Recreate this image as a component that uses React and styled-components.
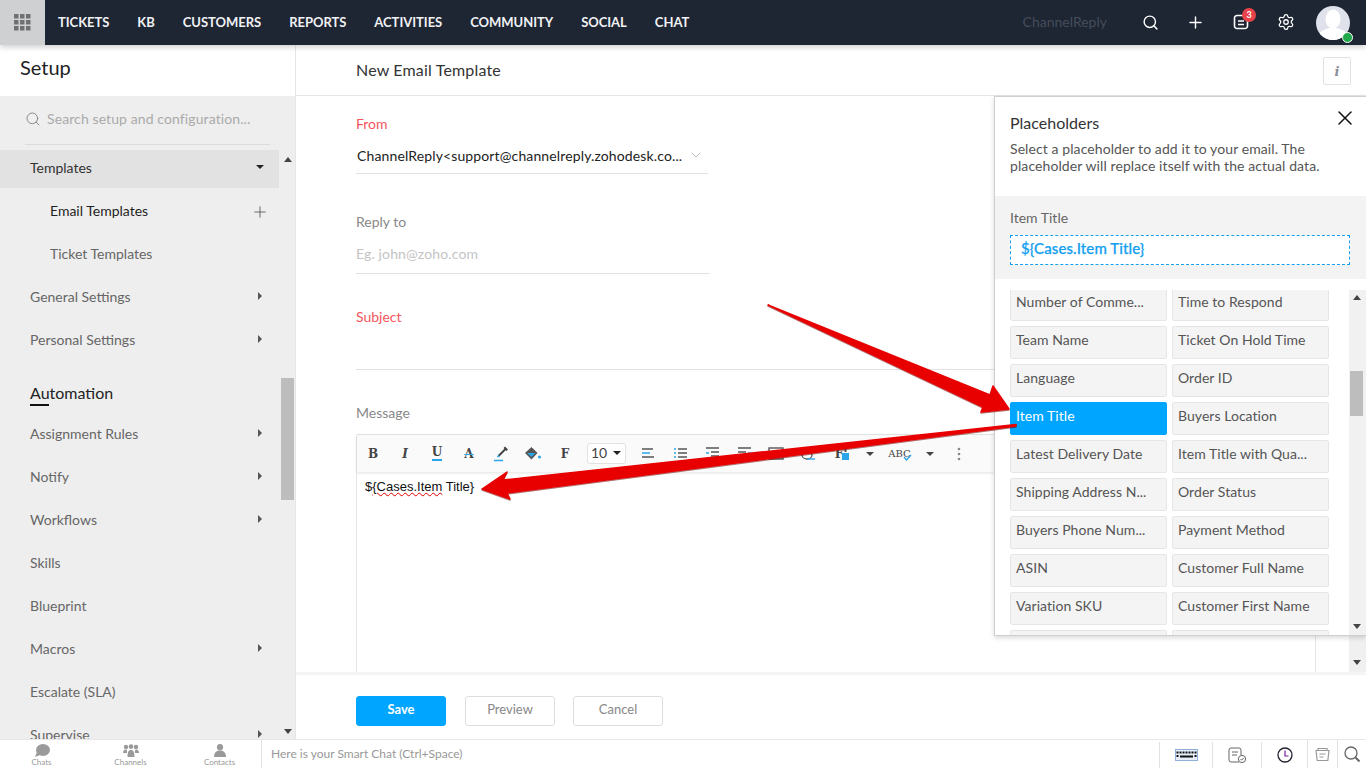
import React from "react";
import styled, { createGlobalStyle } from "styled-components";
import { Search, Plus, Settings, X, ChevronDown } from "lucide-react";

const Global = createGlobalStyle`
  html, body { margin: 0; padding: 0; height: 100%; overflow: hidden; }
  body { font-family: Lato, "Open Sans", sans-serif; font-size: 14px; color: #555; }
  * { box-sizing: border-box; }
`;

const Page = styled.div`
  position: relative;
  width: 1366px;
  height: 768px;
  display: flex;
  flex-direction: column;
  overflow: hidden;
  background: #fff;
`;

/* ---- top bar ---- */
const TopBar = styled.header`
  height: 45px;
  flex: none;
  display: flex;
  align-items: center;
  background: #1e2533;
  box-shadow: 0 2px 6px rgba(0, 0, 0, 0.2);
  position: relative;
  z-index: 3;
  padding-right: 16px;
`;
const AppsButton = styled.div`
  width: 45px;
  height: 45px;
  background: #cfd0d1;
  display: flex;
  align-items: center;
  justify-content: center;
`;
const Nav = styled.nav`
  display: flex;
  gap: 28px;
  margin-left: 13px;
  padding-bottom: 2px;
`;
const NavLink = styled.span`
  font-size: 13px;
  font-weight: 700;
  color: #f0f1f3;
  letter-spacing: -0.03px;
`;
const Brand = styled.span`
  margin-left: auto;
  margin-right: 21px;
  padding-bottom: 2px;
  font-size: 14px;
  color: #454c5a;
`;
const TopIcon = styled.div`
  width: 45px;
  height: 45px;
  display: flex;
  align-items: center;
  justify-content: center;
  position: relative;
  color: #fff;
  padding-bottom: 1px;
`;
const Badge = styled.span`
  position: absolute;
  top: 8px;
  left: 24px;
  width: 14px;
  height: 14px;
  border-radius: 50%;
  background: #e8434a;
  color: #fff;
  font-size: 9px;
  font-weight: 700;
  line-height: 14px;
  text-align: center;
`;
const Avatar = styled.div`
  position: relative;
  width: 34px;
  height: 34px;
  margin-left: 8px;
`;
const OnlineDot = styled.span`
  position: absolute;
  right: -3px;
  bottom: -3px;
  width: 11px;
  height: 11px;
  border-radius: 50%;
  background: #21a84a;
  border: 1px solid #fff;
`;

/* ---- body ---- */
const Body = styled.div`
  flex: 1;
  min-height: 0;
  display: flex;
`;

/* ---- sidebar ---- */
const Sidebar = styled.aside`
  width: 296px;
  flex: none;
  display: flex;
  flex-direction: column;
  background: #eeeeee;
  border-right: 1px solid #e6e6e6;
`;
const SetupHead = styled.div`
  height: 51px;
  flex: none;
  background: #fff;
  padding: 8px 0 0 20px;
  font-size: 20px;
  line-height: 28px;
  color: #222;
`;
const SearchBox = styled.div`
  flex: none;
  height: 49px;
  margin: 0 25px 0;
  border-bottom: 1px solid #dcdcdc;
  display: flex;
  align-items: center;
  gap: 6px;
  color: #aaa;
  font-size: 14px;
  letter-spacing: 0.1px;
  padding-bottom: 3px;
`;
const MenuArea = styled.div`
  flex: 1;
  min-height: 0;
  display: flex;
  padding-top: 5px;
`;
const Menu = styled.div`
  width: 279px;
  flex: none;
  overflow: hidden;
`;
const MenuRow = styled.div`
  height: 38px;
  margin-bottom: 5px;
  display: flex;
  align-items: center;
  justify-content: space-between;
  padding: 0 15px 4px ${(p) => (p.$sub ? "50px" : "30px")};
  background: ${(p) => (p.$open ? "#e2e2e2" : "transparent")};
  color: ${(p) => (p.$open ? "#333" : p.$active ? "#1f1f1f" : "#666")};
  font-size: 14px;
`;
const MenuHeading = styled.div`
  height: 51px;
  padding: 18px 0 0 30px;
  font-size: 16px;
  line-height: 20px;
  color: #222;
`;
const HeadingText = styled.span`
  display: inline-block;
  position: relative;
  &::after {
    content: "";
    position: absolute;
    left: 0;
    bottom: -3px;
    width: 19px;
    height: 2px;
    background: #111;
  }
`;
const CaretRight = styled.span`
  width: 0;
  height: 0;
  border-top: 4px solid transparent;
  border-bottom: 4px solid transparent;
  border-left: 4px solid #555;
  margin-right: 2px;
`;
const CaretDown = styled.span`
  width: 0;
  height: 0;
  border-left: 4px solid transparent;
  border-right: 4px solid transparent;
  border-top: 4px solid ${(p) => p.$color || "#222"};
`;
const AddIcon = styled(Plus)`
  margin-right: -5px;
  margin-top: 3px;
`;
const Scroll = styled.div`
  position: relative;
  flex: none;
  width: ${(p) => p.$w || 16}px;
  margin-left: ${(p) => p.$ml || 0}px;
  background: ${(p) => p.$bg || "transparent"};
`;
const ScrollThumb = styled.div`
  position: absolute;
  left: 1px;
  top: ${(p) => p.$top}px;
  width: 13px;
  height: ${(p) => p.$height}px;
  background: #bdbdbd;
`;
const ArrowUp = styled.span`
  position: absolute;
  left: 4px;
  top: ${(p) => p.$top}px;
  border-left: 4px solid transparent;
  border-right: 4px solid transparent;
  border-bottom: 5px solid #444;
`;
const ArrowDown = styled.span`
  position: absolute;
  left: 4px;
  bottom: ${(p) => p.$bottom}px;
  border-left: 4px solid transparent;
  border-right: 4px solid transparent;
  border-top: 5px solid #444;
`;

/* ---- main ---- */
const Main = styled.main`
  flex: 1;
  min-width: 0;
  position: relative;
  display: flex;
  flex-direction: column;
`;
const MainHead = styled.div`
  height: 51px;
  flex: none;
  display: flex;
  align-items: center;
  justify-content: space-between;
  padding: 0 15px 0 60px;
  border-bottom: 1px solid #e6e6e6;
  font-size: 16px;
  color: #333;
`;
const MainTitle = styled.span`
  letter-spacing: 0.17px;
  padding-bottom: 2px;
`;
const InfoButton = styled.div`
  width: 28px;
  height: 28px;
  border: 1px solid #e2e2e2;
  border-radius: 2px;
  display: flex;
  align-items: center;
  justify-content: center;
  font: italic 700 13px "DejaVu Serif", serif;
  color: #8a8f98;
  margin-top: 2px;
`;
const Content = styled.div`
  flex: 1;
  min-height: 0;
  display: flex;
  overflow: hidden;
`;
const Form = styled.div`
  flex: 1;
  min-width: 0;
  padding: 18px 33px 0 60px;
`;
const Label = styled.div`
  font-size: 14px;
  line-height: 20px;
  margin-top: ${(p) => p.$mt || 0}px;
  color: ${(p) => (p.$required ? "#f4555c" : "#888")};
`;
const Field = styled.div`
  width: ${(p) => (p.$width ? `${p.$width}px` : "100%")};
  height: ${(p) => p.$height}px;
  border-bottom: 1px solid #e2e2e2;
  display: flex;
  align-items: flex-end;
  justify-content: space-between;
  padding-bottom: ${(p) => p.$pb || 8}px;
  padding-left: ${(p) => p.$pl || 0}px;
  line-height: 20px;
  font-size: 14px;
  letter-spacing: 0.13px;
  color: ${(p) => (p.$placeholder ? "#c4c4c4" : "#222")};
`;
const Editor = styled.div`
  margin-top: 11px;
  height: 320px;
  border: 1px solid #e6e6e6;
  border-bottom: 0;
  border-radius: 2px 2px 0 0;
`;
const Toolbar = styled.div`
  height: 37px;
  display: flex;
  align-items: center;
  background: #fafafa;
  box-shadow: 0 1px 3px rgba(0, 0, 0, 0.12);
`;
const Tool = styled.div`
  width: 32px;
  flex: none;
  height: 24px;
  display: flex;
  align-items: center;
  justify-content: center;
  margin-left: ${(p) => p.$ml || 0}px;
  font: ${(p) => (p.$italic ? "italic " : "")}${(p) => p.$weight || 700} ${(p) => p.$size || 12}px "DejaVu Serif", serif;
  color: #444;
`;
const Underlined = styled.span`
  border-bottom: 2px solid #2aa5ea;
  line-height: 13px;
`;
const Struck = styled.span`
  text-decoration: line-through;
  text-decoration-color: #2aa5ea;
`;
const ToolMark = styled.span`
  display: flex;
  margin-left: ${(p) => p.$ml}px;
  margin-top: ${(p) => p.$mt || 0}px;
`;
const FontSize = styled.div`
  width: 39px;
  height: 21px;
  margin: 0 6px;
  flex: none;
  border: 1px solid #e2e2e2;
  border-radius: 3px;
  background: #fff;
  display: flex;
  align-items: center;
  justify-content: space-between;
  padding: 0 4px 2px 3px;
  font-size: 14px;
  color: #444;
`;
const EditorBody = styled.div`
  padding: 6px 8px;
  font-family: "Liberation Sans", Arial, sans-serif;
  font-size: 13px;
  line-height: 17px;
  color: #111;
`;
const Misspelled = styled.span`
  text-decoration: underline wavy #e00000 1px;
`;
const Footer = styled.div`
  height: 67px;
  flex: none;
  display: flex;
  gap: 18px;
  padding: 21px 0 0 60px;
  border-top: 3px solid #f5f5f5;
`;
const Button = styled.div`
  width: 90px;
  height: 30px;
  border-radius: 3px;
  display: flex;
  align-items: center;
  justify-content: center;
  padding-bottom: 5px;
  font-size: 13px;
  font-weight: ${(p) => (p.$primary ? 700 : 400)};
  margin-right: ${(p) => (p.$primary ? "1px" : "0")};
  background: ${(p) => (p.$primary ? "#00a5ff" : "#fff")};
  color: ${(p) => (p.$primary ? "#fff" : "#888")};
  border: 1px solid ${(p) => (p.$primary ? "#00a5ff" : "#dedede")};
`;

/* ---- placeholders panel ---- */
const Panel = styled.section`
  position: absolute;
  top: 51px;
  right: 0;
  width: 372px;
  height: 540px;
  background: #fff;
  border: 1px solid #cfcfcf;
  border-right: 0;
  box-shadow: 0 2px 5px rgba(0, 0, 0, 0.15);
  display: flex;
  flex-direction: column;
  z-index: 2;
`;
const PanelHead = styled.div`
  position: relative;
  height: 99px;
  flex: none;
  padding: 16px 40px 0 15px;
`;
const PanelTitle = styled.div`
  font-size: 16px;
  line-height: 20px;
  color: #333;
`;
const PanelText = styled.p`
  margin: 7px 0 0;
  font-size: 14px;
  line-height: 17px;
  letter-spacing: 0.09px;
  color: #555;
`;
const Close = styled.div`
  position: absolute;
  top: 9px;
  right: 9px;
  color: #111;
  display: flex;
`;
const Preview = styled.div`
  height: 83px;
  flex: none;
  background: #f3f3f3;
  padding: 12px 16px 0 15px;
`;
const PreviewLabel = styled.div`
  font-size: 14px;
  line-height: 20px;
  color: #666;
`;
const TokenBox = styled.div`
  margin-top: 7px;
  height: 30px;
  background: #fff;
  border: 1px dashed #14a0f0;
  padding-left: 10px;
  font-size: 15px;
  font-weight: 500;
  line-height: 25px;
  letter-spacing: 0.1px;
  color: #14a0f0;
  -webkit-text-stroke: 0.25px #14a0f0;
`;
const ListWrap = styled.div`
  flex: 1;
  min-height: 0;
  margin-top: 11px;
  display: flex;
  justify-content: space-between;
  padding-left: 15px;
`;
const ChipList = styled.div`
  width: 320px;
  overflow: hidden;
`;
const ChipGrid = styled.div`
  margin-top: -2px;
  display: grid;
  grid-template-columns: 157px 157px;
  grid-auto-rows: 33px;
  column-gap: 5px;
  row-gap: 5px;
`;
const Chip = styled.div`
  border: 1px solid ${(p) => (p.$active ? "#00a5ff" : "#e6e6e6")};
  border-radius: 2px;
  background: ${(p) => (p.$active ? "#00a5ff" : "#f4f4f4")};
  color: ${(p) => (p.$active ? "#fff" : "#555")};
  font-size: 14px;
  line-height: 20px;
  letter-spacing: 0.05px;
  padding: 3px 0 0 5px;
  white-space: nowrap;
  overflow: hidden;
`;

/* ---- bottom bar ---- */
const BottomBar = styled.footer`
  height: 29px;
  flex: none;
  display: flex;
  align-items: stretch;
  background: #fff;
  border-top: 1px solid #e8e8e8;
  position: relative;
  z-index: 2;
`;
const ChatTabs = styled.div`
  width: 262px;
  flex: none;
  display: flex;
  border-right: 1px solid #e2e2e2;
`;
const ChatTab = styled.div`
  width: 89px;
  flex: none;
  display: flex;
  flex-direction: column;
  align-items: center;
  gap: 1px;
  font-size: 8px;
  line-height: 9px;
  color: #999;
  padding-top: 4px;
  margin-left: ${(p) => p.$ml || 0}px;
`;
const SmartChat = styled.div`
  flex: 1;
  padding: 0 0 2px 9px;
  display: flex;
  align-items: center;
  font-size: 12px;
  color: #999;
`;
const Dock = styled.div`
  width: ${(p) => p.$w}px;
  flex: none;
  display: flex;
  align-items: center;
  justify-content: center;
  border-left: 1px solid #e2e2e2;
  margin: ${(p) => (p.$tall ? "0" : "2px 0 0")};
`;

/* ---- annotation arrows ---- */
const ArrowLayer = styled.svg`
  position: absolute;
  inset: 0;
  width: 1366px;
  height: 768px;
  pointer-events: none;
  z-index: 4;
`;

/* ---- small drawings ---- */
const Grid3 = () => (
  <svg width="17" height="17" viewBox="0 0 17 17" fill="#6f7072">
    {[0, 6, 12].flatMap((y) => [0, 6, 12].map((x) => <rect key={`${x}${y}`} x={x} y={y} width="4.5" height="4.5" />))}
  </svg>
);
const NoteIcon = () => (
  <svg width="18" height="18" viewBox="0 0 18 18" fill="none" stroke="#fff" strokeWidth="1.6">
    <path d="M11 2.500H5A2.500 2.500 0 0 0 2.500 5v8A2.500 2.500 0 0 0 5 15.500h8a2.500 2.500 0 0 0 2.500-2.500V8" />
    <path d="M6 8h6M6 11.500h6" />
  </svg>
);
const AvatarArt = () => (
  <svg width="34" height="34" viewBox="0 0 34 34">
    <defs><clipPath id="av"><circle cx="17" cy="17" r="17" /></clipPath></defs>
    <g clipPath="url(#av)">
      <rect width="34" height="34" fill="#dfe2ea" />
      <ellipse cx="17" cy="13" rx="7.500" ry="9.500" fill="#fff" />
      <path d="M0 34c1-8 8-10 13-12h8c5 2 12 4 13 12z" fill="#fff" />
    </g>
  </svg>
);
const Lines = ({ d }) => (
  <svg width="15" height="13" viewBox="0 0 15 13" fill="none" strokeWidth="1.500">
    {d.map(([x1, x2, y, c], i) => (
      <path key={i} d={`M${x1} ${y}H${x2}`} stroke={c ? "#2aa5ea" : "#555"} />
    ))}
  </svg>
);
const Pen = () => (
  <svg width="17" height="17" viewBox="0 0 17 17" fill="none">
    <path d="M12 1.500l3 3-1.500 1.500-.8-.8-6 6-2.200.8.800-2.200 6-6-.8-.8z" fill="#444" />
    <path d="M5 9.500l-1 3 3-1z" fill="#2aa5ea" />
    <path d="M1 15.500h9" stroke="#2aa5ea" strokeWidth="1.500" />
  </svg>
);
const Bucket = () => (
  <svg width="18" height="16" viewBox="0 0 18 16">
    <path d="M7.500 1l6 6-6 6.500-6.500-6.500z" fill="#555" />
    <path d="M3 7h8.500L7.500 11z" fill="#2aa5ea" />
    <path d="M8 1.500c2-1 3.500 0 3.500 2" stroke="#fff" fill="none" />
    <circle cx="15.500" cy="11" r="1.500" fill="#2aa5ea" />
  </svg>
);
const ImageBox = () => (
  <svg width="16" height="13" viewBox="0 0 16 13" fill="none" stroke="#555" strokeWidth="1.400"><rect x="1" y="1" width="14" height="11" /></svg>
);
const Eraser = () => (
  <svg width="16" height="14" viewBox="0 0 16 14" fill="none"><ellipse cx="7" cy="8" rx="5" ry="4" stroke="#555" strokeWidth="1.300" /><path d="M7 12h8" stroke="#2aa5ea" strokeWidth="1.400" /></svg>
);
const BlueF = () => (
  <svg width="11" height="15" viewBox="0 0 11 15"><rect x="2" y="7" width="7" height="7" fill="#2aa5ea" /><rect x="4.500" y="1" width="2" height="5" fill="#555" /></svg>
);
const Spell = () => (
  <svg width="9" height="7" viewBox="0 0 9 7" fill="none" stroke="#2aa5ea" strokeWidth="1.400"><path d="M1 3l2.500 3 4.500-5" /></svg>
);
const Dots = () => (
  <svg width="4" height="14" viewBox="0 0 4 14" fill="#888"><circle cx="2" cy="2" r="1.300" /><circle cx="2" cy="7" r="1.300" /><circle cx="2" cy="12" r="1.300" /></svg>
);
const ChatBubble = () => (
  <svg width="16" height="13" viewBox="0 0 16 13" fill="#9a9a9a"><ellipse cx="9" cy="6" rx="7" ry="6" /><path d="M3 8l-2 5 5-2z" /></svg>
);
const GroupIcon = () => (
  <svg width="16" height="13" viewBox="0 0 16 13" fill="#9a9a9a"><circle cx="3" cy="3" r="2.200" /><circle cx="8" cy="2.600" r="2.300" /><circle cx="13" cy="3" r="2.200" /><path d="M0 9c0-3 2-3.600 3-3.600S4 6 4 9zM12 9c0-3 0-3.600 1-3.600s3 .6 3 3.600zM4.500 13c0-6 1.500-7 3.500-7s3.500 1 3.500 7z" /></svg>
);
const PersonIcon = () => (
  <svg width="14" height="13" viewBox="0 0 14 13" fill="#9a9a9a"><circle cx="7" cy="3.200" r="3.100" /><path d="M1 13c0-5 3-6.500 6-6.500s6 1.500 6 6.500z" /></svg>
);
const Keyboard = () => (
  <svg width="23" height="12" viewBox="0 0 23 12">
    <rect x="0.500" y="0.500" width="22" height="11" fill="#e8eef8" stroke="#8fb0d8" />
    <g fill="#111">
      {[2, 5, 8, 11, 14, 17, 20].map((x) => <rect key={x} x={x - 0.5} y="2.500" width="2" height="2" />)}
      <rect x="1.500" y="6" width="2" height="2" /><rect x="5" y="6.500" width="13" height="2" /><rect x="19.500" y="6" width="2" height="2" />
    </g>
  </svg>
);
const TaskIcon = () => (
  <svg width="19" height="16" viewBox="0 0 19 16" fill="none" stroke="#666" strokeWidth="1">
    <path d="M11 15H3a2 2 0 0 1-2-2V3a2 2 0 0 1 2-2h8a2 2 0 0 1 2 2v5" />
    <path d="M4 5h6M4 8h5" />
    <circle cx="14" cy="12" r="3.600" /><path d="M12.500 12l1.200 1.200 2-2.200" />
  </svg>
);
const Clock = () => (
  <svg width="16" height="16" viewBox="0 0 16 16" fill="none">
    <circle cx="8" cy="8" r="7" stroke="#223" strokeWidth="1.300" />
    <path d="M8 3.500V9h3.500" stroke="#7a1fa0" strokeWidth="1.200" />
  </svg>
);
const Notes = () => (
  <svg width="15" height="15" viewBox="0 0 15 15" fill="none" stroke="#999" strokeWidth="1.200">
    <path d="M1 3.500h13l-1.200 10H2.200z" /><path d="M3 3.500V1.500h9v2M4.500 7h6M4.500 10h4" />
  </svg>
);
const DockSearch = () => (
  <svg width="17" height="17" viewBox="0 0 17 17" fill="none" stroke="#666" strokeWidth="1.300"><circle cx="7" cy="7" r="6" /><path d="M11.500 11.500l4 4" strokeWidth="2" /></svg>
);

/* ---- data ---- */
const chips = [
  ["Number of Comme...", "Time to Respond"],
  ["Team Name", "Ticket On Hold Time"],
  ["Language", "Order ID"],
  ["Item Title", "Buyers Location"],
  ["Latest Delivery Date", "Item Title with Qua..."],
  ["Shipping Address N...", "Order Status"],
  ["Buyers Phone Num...", "Payment Method"],
  ["ASIN", "Customer Full Name"],
  ["Variation SKU", "Customer First Name"],
  ["", ""],
];
const menuTop = [
  { t: "General Settings", c: true },
  { t: "Personal Settings", c: true },
];
const menuAuto = [
  { t: "Assignment Rules", c: true },
  { t: "Notify", c: true },
  { t: "Workflows", c: true },
  { t: "Skills" },
  { t: "Blueprint" },
  { t: "Macros", c: true },
  { t: "Escalate (SLA)" },
  { t: "Supervise", c: true },
];
const nav = ["TICKETS", "KB", "CUSTOMERS", "REPORTS", "ACTIVITIES", "COMMUNITY", "SOCIAL", "CHAT"];

export default function App() {
  return (
    <Page>
      <Global />
      <TopBar>
        <AppsButton><Grid3 /></AppsButton>
        <Nav>{nav.map((n) => <NavLink key={n}>{n}</NavLink>)}</Nav>
        <Brand>ChannelReply</Brand>
        <TopIcon><Search size={17} strokeWidth={2} /></TopIcon>
        <TopIcon><Plus size={19} strokeWidth={1.8} /></TopIcon>
        <TopIcon><NoteIcon /><Badge>3</Badge></TopIcon>
        <TopIcon><Settings size={18} strokeWidth={1.7} /></TopIcon>
        <Avatar><AvatarArt /><OnlineDot /></Avatar>
      </TopBar>

      <Body>
        <Sidebar>
          <SetupHead>Setup</SetupHead>
          <SearchBox><Search size={16} color="#8a8a8a" strokeWidth={1.5} />Search setup and configuration...</SearchBox>
          <MenuArea>
            <Menu>
              <MenuRow $open>Templates<CaretDown /></MenuRow>
              <MenuRow $sub $active>Email Templates<AddIcon size={18} strokeWidth={1} color="#444" /></MenuRow>
              <MenuRow $sub>Ticket Templates</MenuRow>
              {menuTop.map((m) => <MenuRow key={m.t}>{m.t}{m.c && <CaretRight />}</MenuRow>)}
              <MenuHeading><HeadingText>Automation</HeadingText></MenuHeading>
              {menuAuto.map((m) => <MenuRow key={m.t}>{m.t}{m.c && <CaretRight />}</MenuRow>)}
            </Menu>
            <Scroll $ml={1}>
              <ArrowUp $top={7} />
              <ScrollThumb $top={228} $height={122} />
              <ArrowDown $bottom={5} />
            </Scroll>
          </MenuArea>
        </Sidebar>

        <Main>
          <MainHead><MainTitle>New Email Template</MainTitle><InfoButton>i</InfoButton></MainHead>
          <Content>
            <Form>
              <Label $required>From</Label>
              <Field $width={352} $height={40} $pb={7} $pl={1}>
                ChannelReply&lt;support@channelreply.zohodesk.co...
                <ChevronDown size={16} strokeWidth={1.5} color="#bbb" style={{ marginBottom: 3, marginRight: 4 }} />
              </Field>
              <Label $mt={38}>Reply to</Label>
              <Field $width={354} $height={42} $pb={9} $placeholder>Eg. john@zoho.com</Field>
              <Label $mt={33} $required>Subject</Label>
              <Field $height={43} />
              <Label $mt={33}>Message</Label>
              <Editor>
                <Toolbar>
                  <Tool>B</Tool>
                  <Tool $italic>I</Tool>
                  <Tool><Underlined>U</Underlined></Tool>
                  <Tool><Struck>A</Struck></Tool>
                  <Tool><Pen /></Tool>
                  <Tool><Bucket /></Tool>
                  <Tool>F</Tool>
                  <FontSize>10<CaretDown /></FontSize>
                  <Tool><Lines d={[[1, 12, 2, 0], [1, 9, 6, 1], [1, 13, 10, 0]]} /></Tool>
                  <Tool><Lines d={[[1, 3, 2, 1], [5, 14, 2, 0], [1, 3, 6, 1], [5, 14, 6, 0], [1, 3, 10, 1], [5, 14, 10, 0]]} /></Tool>
                  <Tool><Lines d={[[1, 14, 1, 0], [6, 14, 5, 0], [1, 4, 6, 1], [6, 14, 9, 0], [1, 14, 12, 0]]} /></Tool>
                  <Tool><Lines d={[[1, 14, 1, 0], [1, 9, 5, 0], [11, 14, 6, 1], [1, 9, 9, 0], [1, 14, 12, 0]]} /></Tool>
                  <Tool><ImageBox /></Tool>
                  <Tool><Eraser /></Tool>
                  <Tool $ml={3}>F<ToolMark $ml={-3}><BlueF /></ToolMark></Tool>
                  <Tool $ml={-5}><CaretDown $color="#444" /></Tool>
                  <Tool $ml={-2} $size={10} $weight={400}>ABC<ToolMark $ml={-8} $mt={8}><Spell /></ToolMark></Tool>
                  <Tool $ml={-2}><CaretDown $color="#444" /></Tool>
                  <Tool $ml={-3}><Dots /></Tool>
                </Toolbar>
                <EditorBody>$<Misspelled>{"{Cases.Item"}</Misspelled> Title{"}"}</EditorBody>
              </Editor>
            </Form>
            <Scroll $w={17} $bg="#f0f0f0">
              <ArrowDown $bottom={7} />
            </Scroll>
          </Content>
          <Footer>
            <Button $primary>Save</Button>
            <Button>Preview</Button>
            <Button>Cancel</Button>
          </Footer>

          <Panel>
            <PanelHead>
              <PanelTitle>Placeholders</PanelTitle>
              <PanelText>Select a placeholder to add it to your email. The placeholder will replace itself with the actual data.</PanelText>
              <Close><X size={24} strokeWidth={1.5} /></Close>
            </PanelHead>
            <Preview>
              <PreviewLabel>Item Title</PreviewLabel>
              <TokenBox>{"${Cases.Item Title}"}</TokenBox>
            </Preview>
            <ListWrap>
              <ChipList>
                <ChipGrid>
                  {chips.flat().map((c, i) => <Chip key={i} $active={c === "Item Title"}>{c}</Chip>)}
                </ChipGrid>
              </ChipList>
              <Scroll $w={17} $bg="#f1f1f1">
                <ArrowUp $top={5} />
                <ScrollThumb $top={81} $height={45} />
                <ArrowDown $bottom={6} />
              </Scroll>
            </ListWrap>
          </Panel>
        </Main>
      </Body>

      <BottomBar>
        <ChatTabs>
          <ChatTab $ml={-3}><ChatBubble />Chats</ChatTab>
          <ChatTab><GroupIcon />Channels</ChatTab>
          <ChatTab><PersonIcon />Contacts</ChatTab>
        </ChatTabs>
        <SmartChat>Here is your Smart Chat (Ctrl+Space)</SmartChat>
        <Dock $w={53}><Keyboard /></Dock>
        <Dock $w={49}><TaskIcon /></Dock>
        <Dock $w={46}><Clock /></Dock>
        <Dock $w={30} $tall><Notes /></Dock>
        <Dock $w={29} $tall><DockSearch /></Dock>
      </BottomBar>

      <ArrowLayer viewBox="0 0 1366 768">
        <defs>
          <filter id="sh" x="-5%" y="-20%" width="110%" height="140%">
            <feDropShadow dx="0" dy="1" stdDeviation="0.7" floodColor="#600" floodOpacity="0.55" />
          </filter>
        </defs>
        <g filter="url(#sh)" fill="#e80000" stroke="#e80000" strokeLinejoin="round">
          <polygon strokeWidth="1.500" points="768,305 990,395 993,386 1009,409 981,412 983,407" />
          <polygon strokeWidth="1.500" points="1016,424.500 1016,426 507,493 510,499 482,489 507,472 503,480" />
        </g>
      </ArrowLayer>
    </Page>
  );
}
